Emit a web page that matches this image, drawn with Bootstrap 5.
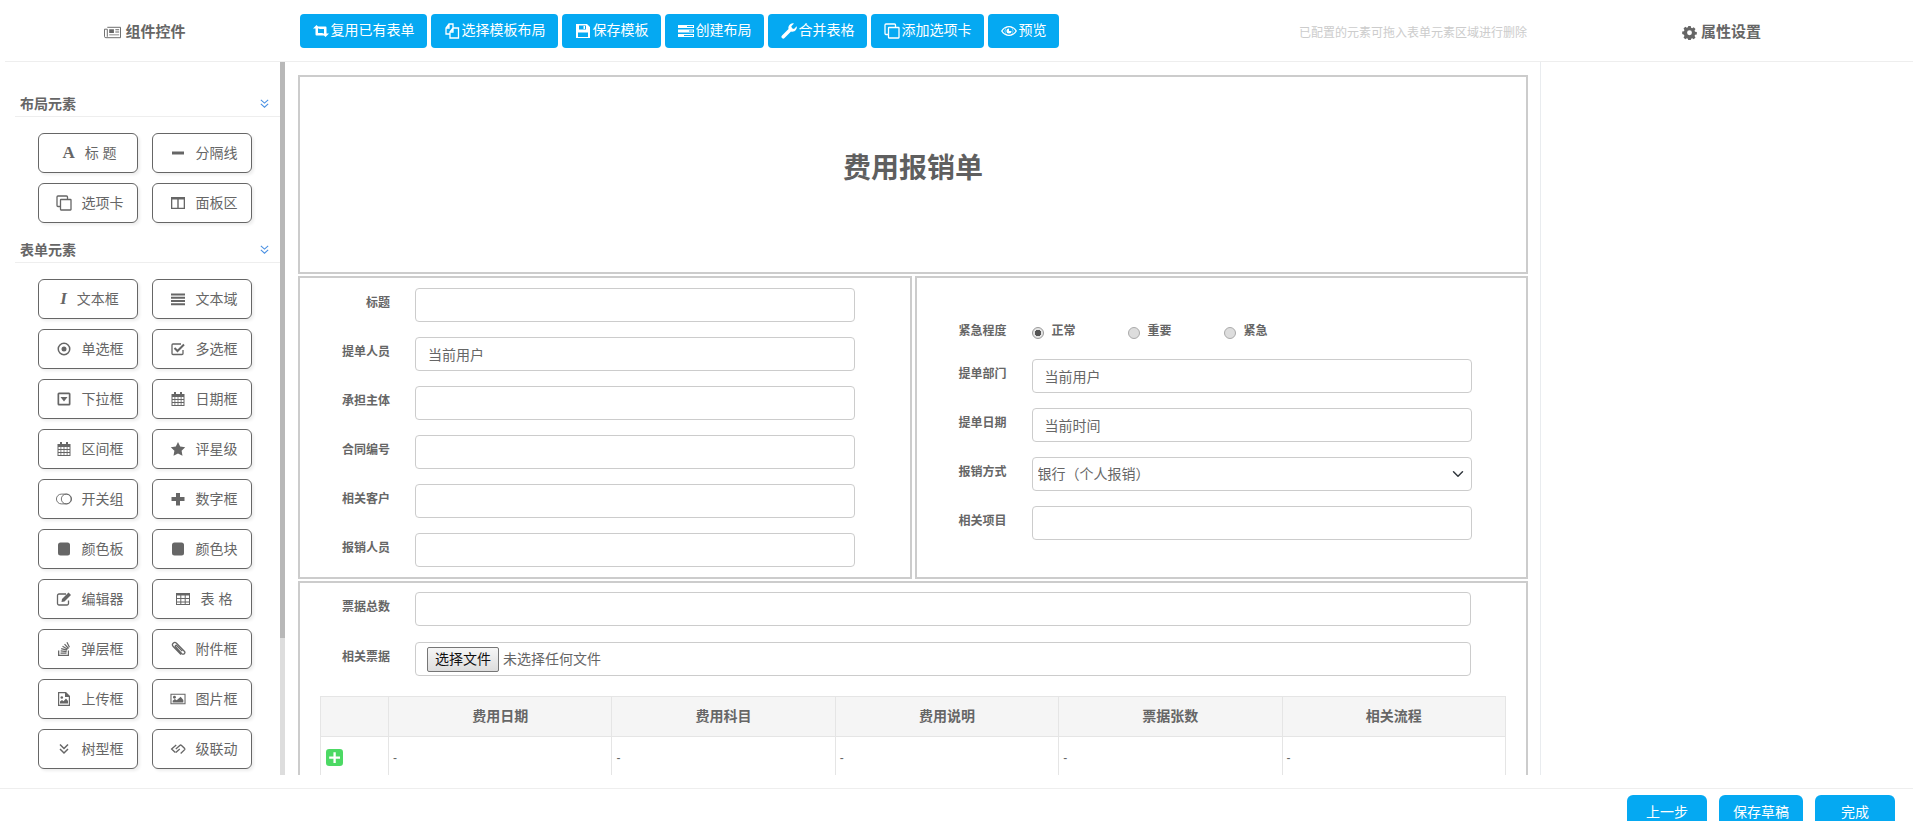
<!DOCTYPE html>
<html lang="zh-CN">
<head>
<meta charset="utf-8">
<title>费用报销单</title>
<link href="https://cdn.jsdelivr.net/npm/bootstrap@5.3.0/dist/css/bootstrap.min.css" rel="stylesheet">
<style>
html,body{height:100%;overflow:hidden;background:#fff}
body{font-family:"Liberation Sans","Noto Sans CJK SC",sans-serif;font-size:14px;color:#666}
.ico{width:1em;height:1em;fill:currentColor;flex:none;display:inline-block}
.top-bar{height:62px;margin-left:5px;border-bottom:1px solid #eee}
.top-left{width:280px;font-size:15px;font-weight:700;padding-top:4px}
.top-left .ico{font-size:17px}
.tool-btns{gap:4px;padding-left:15px}
.tool-btn{background:#05a9f2;border:0;color:#fff;font-size:14px;height:34px;padding:0 12.500px;border-radius:4px;display:flex;align-items:center;gap:2px;white-space:nowrap}
.tool-btn .ico{font-size:16px}
.hint-text{font-size:12px;color:#ccc;margin-left:auto;margin-right:1px;width:230px;white-space:nowrap;padding-top:4px}
.top-right{width:383px;font-size:15px;font-weight:700;padding-top:4px}
.work-area{height:713px;margin-bottom:13px}
.side-panel{width:285px;overflow:hidden;flex:none}
.side-inner{flex:1 1 auto;padding-top:32px;min-width:0}
.side-track{width:5px;flex:none;background:#ddd}
.side-thumb{height:576px;background:#b8b8b8}
.group-head{margin-left:15px;padding:0 10px 3px 5px;height:23px;border-bottom:1px solid #eee;font-size:14px;font-weight:700;line-height:20px}
.group-head .ico{font-size:11px;color:#4a90e2}
.widget-grid{display:grid;grid-template-columns:100px 100px;gap:10px 14px;padding:16px 0 17px 38px}
.widget{height:40px;border:1px solid #666;border-radius:6px;box-shadow:2px 2px 3px #eee;background:#fff;font-size:14px;color:#666;gap:10px;padding-left:3px}
.widget .ico{font-size:16px}
.letter-a{font:bold 17px "Liberation Serif",serif}
.letter-i{font:italic bold 17px "Liberation Serif",serif}
.form-pane{flex:1 1 auto;overflow:hidden;padding:13px 12px 0 13px;min-width:0}
.right-pane{width:373px;flex:none;border-left:1px solid #e9ecef}
.cell-box{border:2px solid #ccc}
.title-box{height:199px;padding-bottom:12px}
.title-box h1{font-size:28px;font-weight:700;color:#5f5f5f;margin:0}
.two-cols{display:grid;grid-template-columns:1fr 1fr;gap:3px;margin:2px 0}
.half-box{height:303px;padding-top:10px}
.half-right{padding-top:41px}
.field-row{display:flex;gap:25px;margin-bottom:15px;height:34px}
.field-label{width:90px;text-align:right;font-size:12px;font-weight:700;color:#666;line-height:30px;flex:none}
.field-input{width:440px}
.field-wide{width:1056px}
.form-control.field-input,.form-control.field-wide,.form-select.field-input{height:34px;min-height:34px;border:1px solid #ccc;font-size:14px;color:#666;border-radius:4px}
.form-select.field-input{padding-left:5px;background-position:right 5px center}
.radio-row{height:24px;margin-bottom:15.500px;align-items:center}
.radio-row .field-label{line-height:24px}
.radio-item{width:96px;font-size:12px;font-weight:700;gap:8px}
.radio-item .form-check-input{width:12px;height:12px;margin:3px 0 0;border:1px solid #aaa;background:#ddd;background-image:none;float:none}
.radio-item .form-check-input:checked{background:radial-gradient(circle,#555 0 3px,#e4e4e4 3.5px);border-color:#999}
.third-box{padding-top:9px}
.third-box .field-row+.field-row{margin-top:16px}
.file-fake{display:flex;align-items:center;gap:4px;padding:0 0 0 11px}
.file-btn{height:25px;padding:0 7px;font-size:14px;color:#111;background:linear-gradient(#f6f6f6,#ddd);border:1px solid #767676;border-radius:2px;line-height:22px}
.fee-table{width:1186px;margin:20px 0 0 20px;table-layout:fixed;--bs-border-color:#e5e5e5;color:#666;--bs-table-color:#666}
.col-first{width:68px}
.fee-table th{background:#f5f5f5;--bs-table-bg:#f5f5f5;text-align:center;font-size:14px;font-weight:700;height:40px;padding:4px;vertical-align:middle;color:#666}
.fee-table td{font-size:12px;height:60px;padding:12px 4px;color:#666}
.fee-table td:first-child{padding:12px 5px}
.add-ico{font-size:17px;color:#4cd964;display:block}
.bottom-bar{border-top:1px solid #eee;padding:6px 18px 0 0;gap:12px;height:33px;overflow:hidden}
.end-btn{background:#05a9f2;color:#fff;border:0;width:80px;height:34px;font-size:14px;border-radius:6px;flex:none}
.end-btn.wider{width:84px}
</style>
</head>
<body>
<svg width="0" height="0" class="position-absolute">
<defs>
<symbol id="i-news" viewBox="0 0 18 16"><path fill="none" stroke="currentColor" d="M3.5 2.5h14v11H2a1.5 1.5 0 0 1-1.500-1.500V4.500h3v8"/><path d="M5.500 4.500h5v4h-5zM12 4.500h4v1h-4zM12 7h4v1h-4zM5.500 10h10.500v1H5.500z"/></symbol>
<symbol id="i-retweet" viewBox="0 0 16 16"><path d="M0 5.500 3.500 2 7 5.500H5V10h4.500l2 2.500H3.500a1 1 0 0 1-1-1v-6zM16 10.500 12.500 14 9 10.500h2V6H6.500l-2-2.500h8a1 1 0 0 1 1 1v6z"/></symbol>
<symbol id="i-clone" viewBox="0 0 16 16"><path fill="none" stroke="currentColor" stroke-width="1.300" d="M4 11.500H2a1 1 0 0 1-1-1V2a1 1 0 0 1 1-1h8.500a1 1 0 0 1 1 1v2M5 4.500h9.500a.5.500 0 0 1 .5.500v9.500a.5.500 0 0 1-.5.500H5a.5.500 0 0 1-.5-.5V5a.5.500 0 0 1 .5-.5z"/></symbol>
<symbol id="i-files" viewBox="0 0 16 16"><path fill="none" stroke="currentColor" stroke-width="1.300" d="M6 11H2V5l3-4h4v4M6 9l3-4h5.500v10H6zM5 1v4H2M9 5v4H6"/></symbol>
<symbol id="i-save" viewBox="0 0 16 16"><path fill-rule="evenodd" d="M1 1h11l3 3v11H1zM4 2.500v4h7v-4zM3 9.500V14h10V9.500zM8.500 3h1.500v3H8.500z"/></symbol>
<symbol id="i-tasks" viewBox="0 0 16 16"><path fill-rule="evenodd" d="M0 2h16v3H0zM9 3v1h6V3zM0 6.500h16v3H0zM11 7.500v1h4v-1zM0 11h16v3H0zM6 12v1h9v-1z"/></symbol>
<symbol id="i-wrench" viewBox="0 0 16 16"><path d="M1 12.500 7.500 6a4.500 4.500 0 0 1 5.500-5.500L10.300 3.200l.7 2 2 .7L15.700 3.200A4.500 4.500 0 0 1 10 8.500L3.500 15a1.700 1.700 0 0 1-2.500-2.500z"/></symbol>
<symbol id="i-eye" viewBox="0 0 16 16"><path fill-rule="evenodd" d="M0 8c2-3.500 5-5 8-5s6 1.500 8 5c-2 3.500-5 5-8 5s-6-1.500-8-5zm8-3.800A3.800 3.800 0 1 0 8 11.800 3.800 3.800 0 0 0 8 4.200zM1.500 8c1 1.500 2.200 2.500 3.500 3.200A5 5 0 0 1 5 4.800C3.700 5.500 2.500 6.500 1.500 8zm13 0c-1-1.500-2.200-2.500-3.500-3.200a5 5 0 0 1 0 6.400c1.300-.7 2.500-1.700 3.500-3.200z"/><path d="M8 5.500a2.500 2.500 0 1 0 2.500 2.500H8z"/></symbol>
<symbol id="i-gear" viewBox="0 0 16 16"><path fill-rule="evenodd" d="M6.700 1h2.600l.4 1.900 1.200.5 1.600-1 1.900 1.900-1 1.600.5 1.200 1.900.4v2.600l-1.900.4-.5 1.200 1 1.600-1.900 1.900-1.600-1-1.200.5-.4 1.900H6.700l-.4-1.900-1.200-.5-1.600 1-1.900-1.900 1-1.600-.5-1.200L.2 9.600V7l1.900-.4.5-1.200-1-1.600 1.900-1.900 1.600 1 1.200-.5zM8 5.700a2.600 2.600 0 1 0 0 5.200 2.600 2.600 0 0 0 0-5.200z"/></symbol>
<symbol id="i-dbl" viewBox="0 0 12 12"><path fill="none" stroke="currentColor" stroke-width="1.200" d="M2 2l4 3.500L10 2M2 6.500 6 10l4-3.500"/></symbol>
<symbol id="i-minus" viewBox="0 0 16 16"><path d="M2 6.500h12v3H2z"/></symbol>
<symbol id="i-cols" viewBox="0 0 16 16"><path fill-rule="evenodd" d="M1 2h14v12H1zM2.300 4.500v8.200h5V4.500zM8.700 4.500v8.200h5V4.500z"/></symbol>
<symbol id="i-lines" viewBox="0 0 16 16"><path d="M1 2.500h14v2H1zM1 5.800h14v2H1zM1 9h14v2H1zM1 12.300h14v2H1z"/></symbol>
<symbol id="i-dot" viewBox="0 0 16 16"><path fill-rule="evenodd" d="M8 1.500a6.500 6.500 0 1 1 0 13 6.500 6.500 0 0 1 0-13zm0 1.500a5 5 0 1 0 0 10 5 5 0 0 0 0-10z"/><circle cx="8" cy="8" r="2.500"/></symbol>
<symbol id="i-check" viewBox="0 0 16 16"><path fill="none" stroke="currentColor" stroke-width="1.300" d="M13 9v3.500a1 1 0 0 1-1 1H3a1 1 0 0 1-1-1v-8.500a1 1 0 0 1 1-1h8"/><path fill="none" stroke="currentColor" stroke-width="2" d="M4.500 7 7.500 10 14 3.500"/></symbol>
<symbol id="i-drop" viewBox="0 0 16 16"><path fill-rule="evenodd" d="M3 1.500h10A1.500 1.500 0 0 1 14.500 3v10a1.500 1.500 0 0 1-1.500 1.500H3A1.500 1.500 0 0 1 1.500 13V3A1.500 1.500 0 0 1 3 1.500zM3.200 3.200v9.600h9.600V3.200z"/><path d="M4.500 6h7L8 10.500z"/></symbol>
<symbol id="i-cal" viewBox="0 0 16 16"><path fill-rule="evenodd" d="M1.500 3H4V1h2v2h4V1h2v2h2.500v12h-13zM2.500 6v2h2V6zM5.300 6v2h2.300V6zM8.400 6v2h2.300V6zM11.500 6v2h2V6zM2.500 9v2h2V9zM5.300 9v2h2.300V9zM8.400 9v2h2.300V9zM11.500 9v2h2V9zM2.500 12v2h2v-2zM5.300 12v2h2.300v-2zM8.400 12v2h2.300v-2zM11.500 12v2h2v-2z"/></symbol>
<symbol id="i-star" viewBox="0 0 16 16"><path d="M8 1l2.200 4.600 5 .7-3.600 3.500.9 5L8 12.400l-4.500 2.400.9-5L.8 6.300l5-.7z"/></symbol>
<symbol id="i-toggle" viewBox="0 0 18 16"><circle cx="11.500" cy="8" r="5.500" fill="none" stroke="currentColor"/><rect x=".5" y="2.500" width="17" height="11" rx="5.500" fill="none" stroke="currentColor"/></symbol>
<symbol id="i-plus" viewBox="0 0 16 16"><path d="M6 2h4v4h4.500v4H10v4.500H6V10H1.500V6H6z"/></symbol>
<symbol id="i-square" viewBox="0 0 16 16"><rect x="2" y="1.500" width="12" height="13" rx="2.500"/></symbol>
<symbol id="i-edit" viewBox="0 0 16 16"><path fill="none" stroke="currentColor" stroke-width="1.300" d="M12.500 9.500v3a1.500 1.500 0 0 1-1.500 1.500H3a1.500 1.500 0 0 1-1.500-1.500v-8A1.500 1.500 0 0 1 3 3h7"/><path d="M6 8 12.500 1.500l2.500 2.500L8.500 10.500 5.500 11z"/></symbol>
<symbol id="i-table" viewBox="0 0 16 16"><path fill-rule="evenodd" d="M1 2h14v12H1zM2 4.500V7h3.300V4.500zM6.300 4.500V7h3.400V4.500zM10.700 4.500V7H14V4.500zM2 8v2.400h3.300V8zM6.300 8v2.400h3.400V8zM10.700 8v2.400H14V8zM2 11.400V13h3.300v-1.600zM6.300 11.400V13h3.400v-1.600zM10.700 11.400V13H14v-1.600z"/></symbol>
<symbol id="i-stack" viewBox="0 0 16 16"><path d="M2 9.500h1.300v4.200h8.500V9.500H13V15H2z"/><path d="M4.500 11.500h6v1.200h-6zM4.700 9.300l6 .7-.1 1.200-6-.7zM5.400 7l5.800 1.600-.3 1.100L5 8.200zM6.800 4.700l5.100 3-.6 1-5.100-3zM9 2.700l4 4.400-.9.800-4-4.400zM11.500 1l2.500 5-1.100.5-2.500-5z"/></symbol>
<symbol id="i-clip" viewBox="0 0 16 16"><path fill="none" stroke="currentColor" stroke-width="1.300" d="M11 13.500 3.200 5.500a2.300 2.300 0 0 1 3.300-3.300l7.800 8a1.700 1.700 0 0 1-2.500 2.500L5.500 5.800a.8.800 0 0 1 1.200-1.200l5.500 5.500"/></symbol>
<symbol id="i-fimg" viewBox="0 0 16 16"><path fill-rule="evenodd" d="M2 1h8l4 4v10H2zM3.200 2.200v11.600h9.600V6H9V2.200z"/><circle cx="5.800" cy="6.500" r="1.300"/><path d="M4 12.500v-2l2 -1.500 1.500 1.200L10 7.500l2 2.500v2.500z"/></symbol>
<symbol id="i-img" viewBox="0 0 18 16"><path fill-rule="evenodd" d="M.5 2h17v12H.5zM1.700 3.200v9.600h14.600V3.200z"/><circle cx="5" cy="6" r="1.600"/><path d="M3 12v-2l2.500-2 2 1.500L12 5.500 15 9v3z"/></symbol>
<symbol id="i-chev" viewBox="0 0 16 16"><path fill="none" stroke="currentColor" stroke-width="1.500" d="M4 3.500 8 7.500l4-4M4 8 8 12l4-4"/></symbol>
<symbol id="i-link" viewBox="0 0 18 16"><path fill="none" stroke="currentColor" stroke-width="1.500" d="M7 3.500 1.800 8 6 12M6.500 8l4.500-4a1.500 1.500 0 0 1 2 0L16.500 7.500a1 1 0 0 1 0 1.200L12 13M11 8l-4.500 4"/></symbol>
<symbol id="i-addbox" viewBox="0 0 16 16"><path fill-rule="evenodd" d="M3 0h10a3 3 0 0 1 3 3v10a3 3 0 0 1-3 3H3a3 3 0 0 1-3-3V3a3 3 0 0 1 3-3zm4 3v4H3v2.200h4v4h2.200v-4h4V7h-4V3z"/></symbol>
</defs>
</svg>

<div class="d-flex flex-column vh-100 overflow-hidden">
  <header class="top-bar d-flex align-items-center flex-shrink-0">
    <div class="top-left d-flex align-items-center justify-content-center gap-1"><svg class="ico"><use href="#i-news"/></svg>组件控件</div>
    <div class="tool-btns d-flex">
      <button class="tool-btn" type="button"><svg class="ico"><use href="#i-retweet"/></svg>复用已有表单</button>
      <button class="tool-btn" type="button"><svg class="ico"><use href="#i-files"/></svg>选择模板布局</button>
      <button class="tool-btn" type="button"><svg class="ico"><use href="#i-save"/></svg>保存模板</button>
      <button class="tool-btn" type="button"><svg class="ico"><use href="#i-tasks"/></svg>创建布局</button>
      <button class="tool-btn" type="button"><svg class="ico"><use href="#i-wrench"/></svg>合并表格</button>
      <button class="tool-btn" type="button"><svg class="ico"><use href="#i-clone"/></svg>添加选项卡</button>
      <button class="tool-btn" type="button"><svg class="ico"><use href="#i-eye"/></svg>预览</button>
    </div>
    <div class="hint-text">已配置的元素可拖入表单元素区域进行删除</div>
    <div class="top-right d-flex align-items-center justify-content-center gap-1"><svg class="ico"><use href="#i-gear"/></svg>属性设置</div>
  </header>

  <div class="work-area d-flex flex-shrink-0">
    <aside class="side-panel d-flex">
      <div class="side-inner">
        <div class="group-head d-flex justify-content-between align-items-center">布局元素<svg class="ico"><use href="#i-dbl"/></svg></div>
        <div class="widget-grid">
          <div class="widget d-flex align-items-center justify-content-center"><span class="letter-a">A</span>标&nbsp;题</div>
          <div class="widget d-flex align-items-center justify-content-center"><svg class="ico"><use href="#i-minus"/></svg>分隔线</div>
          <div class="widget d-flex align-items-center justify-content-center"><svg class="ico"><use href="#i-clone"/></svg>选项卡</div>
          <div class="widget d-flex align-items-center justify-content-center"><svg class="ico"><use href="#i-cols"/></svg>面板区</div>
        </div>
        <div class="group-head d-flex justify-content-between align-items-center">表单元素<svg class="ico"><use href="#i-dbl"/></svg></div>
        <div class="widget-grid">
          <div class="widget d-flex align-items-center justify-content-center"><span class="letter-i">I</span>文本框</div>
          <div class="widget d-flex align-items-center justify-content-center"><svg class="ico"><use href="#i-lines"/></svg>文本域</div>
          <div class="widget d-flex align-items-center justify-content-center"><svg class="ico"><use href="#i-dot"/></svg>单选框</div>
          <div class="widget d-flex align-items-center justify-content-center"><svg class="ico"><use href="#i-check"/></svg>多选框</div>
          <div class="widget d-flex align-items-center justify-content-center"><svg class="ico"><use href="#i-drop"/></svg>下拉框</div>
          <div class="widget d-flex align-items-center justify-content-center"><svg class="ico"><use href="#i-cal"/></svg>日期框</div>
          <div class="widget d-flex align-items-center justify-content-center"><svg class="ico"><use href="#i-cal"/></svg>区间框</div>
          <div class="widget d-flex align-items-center justify-content-center"><svg class="ico"><use href="#i-star"/></svg>评星级</div>
          <div class="widget d-flex align-items-center justify-content-center"><svg class="ico"><use href="#i-toggle"/></svg>开关组</div>
          <div class="widget d-flex align-items-center justify-content-center"><svg class="ico"><use href="#i-plus"/></svg>数字框</div>
          <div class="widget d-flex align-items-center justify-content-center"><svg class="ico"><use href="#i-square"/></svg>颜色板</div>
          <div class="widget d-flex align-items-center justify-content-center"><svg class="ico"><use href="#i-square"/></svg>颜色块</div>
          <div class="widget d-flex align-items-center justify-content-center"><svg class="ico"><use href="#i-edit"/></svg>编辑器</div>
          <div class="widget d-flex align-items-center justify-content-center"><svg class="ico"><use href="#i-table"/></svg>表&nbsp;格</div>
          <div class="widget d-flex align-items-center justify-content-center"><svg class="ico"><use href="#i-stack"/></svg>弹层框</div>
          <div class="widget d-flex align-items-center justify-content-center"><svg class="ico"><use href="#i-clip"/></svg>附件框</div>
          <div class="widget d-flex align-items-center justify-content-center"><svg class="ico"><use href="#i-fimg"/></svg>上传框</div>
          <div class="widget d-flex align-items-center justify-content-center"><svg class="ico"><use href="#i-img"/></svg>图片框</div>
          <div class="widget d-flex align-items-center justify-content-center"><svg class="ico"><use href="#i-chev"/></svg>树型框</div>
          <div class="widget d-flex align-items-center justify-content-center"><svg class="ico"><use href="#i-link"/></svg>级联动</div>
        </div>
      </div>
      <div class="side-track"><div class="side-thumb"></div></div>
    </aside>

    <main class="form-pane">
      <div class="cell-box title-box d-flex align-items-center justify-content-center"><h1>费用报销单</h1></div>
      <div class="two-cols">
        <div class="cell-box half-box">
          <div class="field-row"><label class="field-label">标题</label><input class="form-control field-input" type="text"></div>
          <div class="field-row"><label class="field-label">提单人员</label><input class="form-control field-input" type="text" value="当前用户"></div>
          <div class="field-row"><label class="field-label">承担主体</label><input class="form-control field-input" type="text"></div>
          <div class="field-row"><label class="field-label">合同编号</label><input class="form-control field-input" type="text"></div>
          <div class="field-row"><label class="field-label">相关客户</label><input class="form-control field-input" type="text"></div>
          <div class="field-row"><label class="field-label">报销人员</label><input class="form-control field-input" type="text"></div>
        </div>
        <div class="cell-box half-box half-right">
          <div class="field-row radio-row">
            <label class="field-label">紧急程度</label>
            <div class="d-flex">
              <div class="radio-item d-flex align-items-center"><input class="form-check-input" type="radio" name="lvl" checked>正常</div>
              <div class="radio-item d-flex align-items-center"><input class="form-check-input" type="radio" name="lvl">重要</div>
              <div class="radio-item d-flex align-items-center"><input class="form-check-input" type="radio" name="lvl">紧急</div>
            </div>
          </div>
          <div class="field-row"><label class="field-label">提单部门</label><input class="form-control field-input" type="text" value="当前用户"></div>
          <div class="field-row"><label class="field-label">提单日期</label><input class="form-control field-input" type="text" value="当前时间"></div>
          <div class="field-row"><label class="field-label">报销方式</label><select class="form-select field-input"><option>银行（个人报销）</option></select></div>
          <div class="field-row"><label class="field-label">相关项目</label><input class="form-control field-input" type="text"></div>
        </div>
      </div>
      <div class="cell-box third-box">
        <div class="field-row"><label class="field-label">票据总数</label><input class="form-control field-wide" type="text"></div>
        <div class="field-row"><label class="field-label">相关票据</label><div class="form-control field-wide file-fake"><span class="file-btn">选择文件</span><span>未选择任何文件</span></div></div>
        <table class="table table-bordered fee-table">
          <colgroup><col class="col-first"><col><col><col><col><col></colgroup>
          <thead><tr><th></th><th>费用日期</th><th>费用科目</th><th>费用说明</th><th>票据张数</th><th>相关流程</th></tr></thead>
          <tbody><tr><td><svg class="ico add-ico"><use href="#i-addbox"/></svg></td><td>-</td><td>-</td><td>-</td><td>-</td><td>-</td></tr></tbody>
        </table>
      </div>
    </main>
    <aside class="right-pane"></aside>
  </div>

  <footer class="bottom-bar d-flex justify-content-end flex-shrink-0">
    <button class="end-btn" type="button">上一步</button>
    <button class="end-btn wider" type="button">保存草稿</button>
    <button class="end-btn" type="button">完成</button>
  </footer>
</div>
<script src="https://cdn.jsdelivr.net/npm/bootstrap@5.3.0/dist/js/bootstrap.bundle.min.js"></script>
</body>
</html>
